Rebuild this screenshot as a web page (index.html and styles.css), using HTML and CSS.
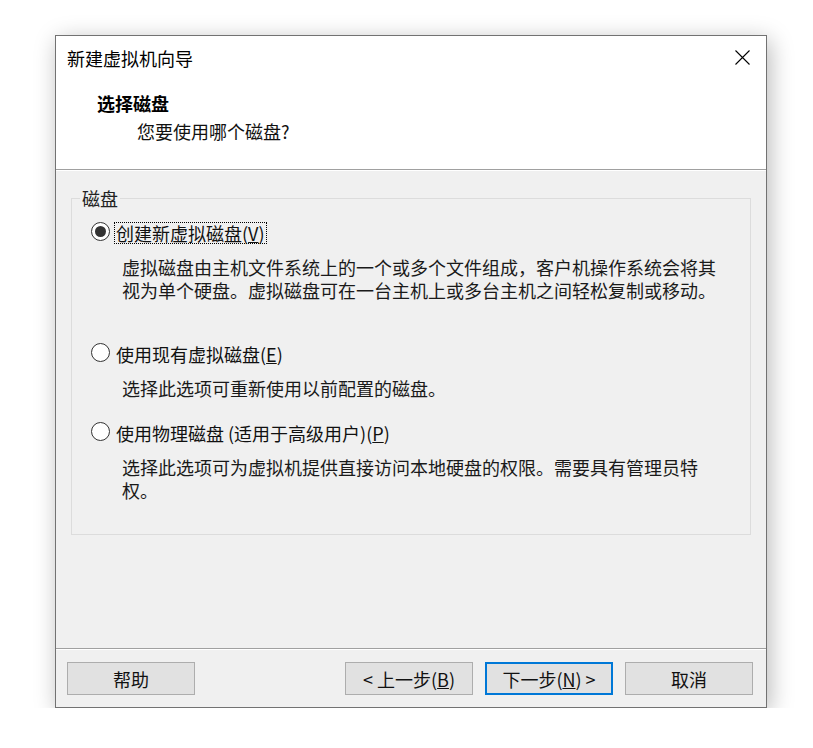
FILE: index.html
```html
<!DOCTYPE html>
<html lang="zh-CN">
<head>
<meta charset="utf-8">
<title>新建虚拟机向导</title>
<link rel="stylesheet" href="styles.css">
</head>
<body>
<div class="window">
  <div class="header">
    <div class="titlebar">
      <span class="title">新建虚拟机向导</span>
      <svg class="close" width="15" height="15" viewBox="0 0 15 15"><path d="M0.5 0.5 L14.5 14.5 M14.5 0.5 L0.5 14.5" stroke="#000" stroke-width="1.1" fill="none"/></svg>
    </div>
    <div class="heading">选择磁盘</div>
    <div class="subheading">您要使用哪个磁盘?</div>
  </div>
  <div class="body">
    <div class="group">
      <div class="legend">磁盘</div>
      <div class="option first">
        <span class="radio checked"></span>
        <span class="label focus">创建新虚拟磁盘(<u>V</u>)</span>
      </div>
      <div class="desc">虚拟磁盘由主机文件系统上的一个或多个文件组成，客户机操作系统会将其<br>视为单个硬盘。虚拟磁盘可在一台主机上或多台主机之间轻松复制或移动。</div>
      <div class="option second">
        <span class="radio"></span>
        <span class="label">使用现有虚拟磁盘(<u>E</u>)</span>
      </div>
      <div class="desc">选择此选项可重新使用以前配置的磁盘。</div>
      <div class="option third">
        <span class="radio"></span>
        <span class="label">使用物理磁盘 (适用于高级用户)(<u>P</u>)</span>
      </div>
      <div class="desc">选择此选项可为虚拟机提供直接访问本地硬盘的权限。需要具有管理员特<br>权。</div>
    </div>
  </div>
  <div class="footer">
    <button class="btn">帮助</button>
    <div class="spacer"></div>
    <button class="btn">&lt; 上一步(<u>B</u>)</button>
    <button class="btn default">下一步(<u>N</u>) &gt;</button>
    <button class="btn">取消</button>
  </div>
</div>
</body>
</html>
```

FILE: styles.css
```css
html, body {
  margin: 0;
  padding: 0;
  background: #ffffff;
}
body {
  font-family: "Noto Sans CJK SC", "Noto Sans", sans-serif;
  font-size: 18px;
  color: #111;
}
.window {
  box-sizing: border-box;
  margin: 35px 0 0 55px;
  width: 712px;
  height: 673px;
  border: 1px solid #727272;
  background: #f0f0f0;
  box-shadow: 3px 5px 22px rgba(0, 0, 0, 0.28);
  display: flex;
  flex-direction: column;
}
.header {
  background: #ffffff;
  height: 134px;
  box-sizing: border-box;
  border-bottom: 1px solid #a0a0a0;
  flex: none;
}
.titlebar {
  height: 44px;
  display: flex;
  align-items: center;
  justify-content: space-between;
  padding: 0 16px 0 11px;
}
.title {
  line-height: 24px;
  color: #000;
}
.close {
  display: block;
  margin-top: -1px;
}
.heading {
  margin-top: 11px;
  padding-left: 41px;
  line-height: 24px;
  font-weight: 700;
  color: #000;
}
.subheading {
  margin-top: 4px;
  padding-left: 81px;
  line-height: 24px;
  color: #111;
}
.body {
  flex: 1;
  padding: 27px 15px 0 15px;
  border-top: 1px solid #ffffff;
}
.group {
  box-sizing: border-box;
  height: 337px;
  border: 1px solid #dcdcdc;
}
.legend {
  width: fit-content;
  margin: -12px 0 0 8px;
  padding: 0 2px;
  line-height: 22px;
  background: #f0f0f0;
  color: #222;
}
.option {
  display: flex;
  align-items: center;
  height: 24px;
  padding-left: 19px;
}
.option.first { margin-top: 12px; }
.option.second { margin-top: 40px; }
.option.third { margin-top: 21px; }
.radio {
  box-sizing: border-box;
  width: 19px;
  height: 19px;
  border: 1px solid #333;
  border-radius: 50%;
  background: #fff;
  display: flex;
  align-items: center;
  justify-content: center;
  margin-top: -3px;
}
.radio.checked::after {
  content: "";
  width: 11px;
  height: 11px;
  border-radius: 50%;
  background: #333;
}
.label {
  margin-left: 4px;
  padding: 0 1px;
  line-height: 20px;
  border: 1px dotted transparent;
}
.label.focus {
  border-color: #000;
}
.desc {
  margin-top: 11px;
  padding-left: 50px;
  line-height: 23px;
  color: #1a1a1a;
}
.footer {
  flex: none;
  height: 59px;
  box-sizing: border-box;
  border-top: 1px solid #a0a0a0;
  box-shadow: inset 0 1px 0 #ffffff;
  display: flex;
  align-items: flex-start;
  gap: 12px;
  padding: 13px 13px 0 11px;
}
.spacer {
  flex: 1;
}
.btn {
  box-sizing: border-box;
  width: 128px;
  height: 33px;
  margin: 0;
  padding: 0;
  border: 1px solid #adadad;
  background: #e1e1e1;
  font-family: "Noto Sans CJK SC", "Noto Sans", sans-serif;
  font-size: 18px;
  line-height: 22px;
  color: #111;
}
.btn.default {
  border: 2px solid #0078d7;
}
```
